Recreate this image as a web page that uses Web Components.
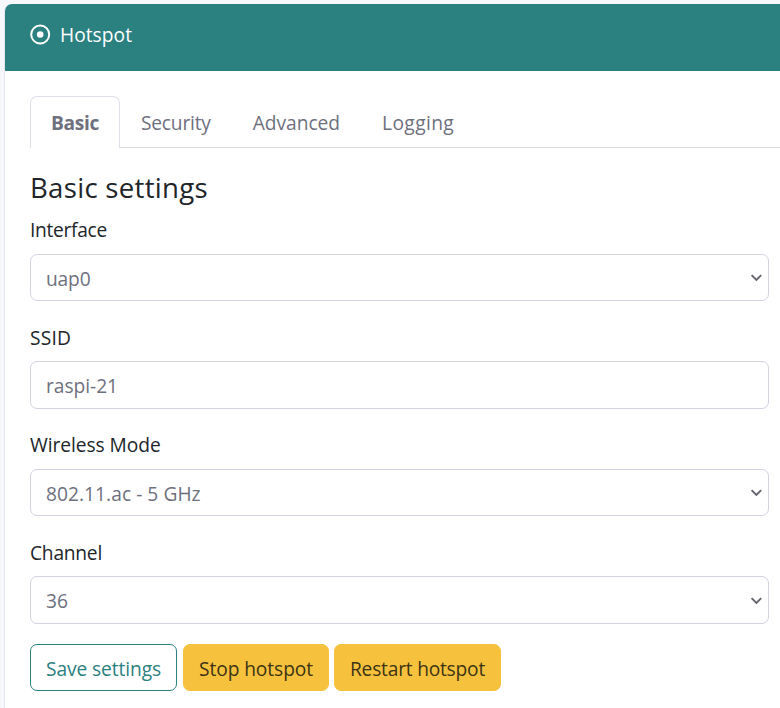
<!DOCTYPE html>
<html lang="en">
<head>
<meta charset="utf-8">
<title>Hotspot</title>
<style>
html,body{margin:0;height:100%;overflow:hidden;background:#f7f8fc}
body{font:19.2px/29px "Open Sans","Noto Sans",sans-serif;color:#212529}
</style>
</head>
<body>
<hotspot-page></hotspot-page>
<script>
function define(name, html, setup) {
  const template = document.createElement('template');
  template.innerHTML = html;
  customElements.define(name, class extends HTMLElement {
    connectedCallback() {
      if (this.shadowRoot) return;
      this.attachShadow({mode: 'open'}).append(template.content.cloneNode(true));
      if (setup) setup(this, this.shadowRoot);
    }
  });
}

// Text run that spreads its letters over the width given in pixels.
define('fit-text', `<style>:host{display:inline-block;white-space:pre;text-align:left}span{display:inline-block}</style><span></span>`,
  (host, root) => {
    const span = root.querySelector('span');
    span.textContent = host.getAttribute('text');
    const width = Number(host.getAttribute('width'));
    const natural = span.getBoundingClientRect().width;
    span.style.letterSpacing = (width - natural) / span.textContent.length + 'px';
    host.style.width = width + 'px';
  });

define('card-header', `<style>
  :host{display:flex;align-items:flex-start;box-sizing:border-box;height:67px;padding:16px 25px 0;gap:9px;background:#2b8080;color:#fff;border-radius:7px 0 0 0}
  svg{display:block;width:21px;height:21px;margin-top:4px}
</style>
<svg viewBox="0 0 21 21"><circle cx="10.2" cy="10.5" r="9" fill="none" stroke="#fff" stroke-width="2"/><circle cx="10.2" cy="10.5" r="3.3" fill="#fff"/></svg>
<slot></slot>`);

define('tab-item', `<style>
  :host{display:block;box-sizing:border-box;height:52px;padding:11px 20px 0;border:1px solid transparent;border-bottom:0;border-radius:7px 7px 0 0;color:#6e707e}
  :host([active]){font-weight:700;border-color:#dddfeb;background:#fff}
</style><slot></slot>`);

define('tab-bar', `<style>
  :host{display:flex;height:51px;border-bottom:1px solid #d9dbe0;margin-right:-12px}
</style><slot></slot>`);

define('form-field', `<style>
  :host{display:block;height:107.4px}
  .label{height:29px;margin-bottom:9.5px}
  .control{display:flex;justify-content:space-between;box-sizing:border-box;height:47.5px;padding:9px 5px 0 15px;border:1px solid #d1d3e2;border-radius:7px;color:#6e707e;background:#fff}
  svg{width:14px;height:14px;margin-top:7.6px;display:none}
  :host([select]) svg{display:block}
</style>
<div class="label"><slot name="label"></slot></div>
<div class="control"><slot></slot><svg viewBox="0 0 14 14"><path d="M2.6 4.2 7.4 9l4.8-4.8" fill="none" stroke="#62636c" stroke-width="1.9"/></svg></div>`);

define('action-button', `<style>
  :host{display:block;box-sizing:border-box;height:47px;padding:9px 15px 0;border:1px solid #f6c23e;border-radius:7px;background:#f6c23e;color:#3d3315}
  :host([outline]){border-color:#2b8080;background:#fff;color:#2b8080}
</style><slot></slot>`);

define('hotspot-page', `<style>
  :host{display:block;box-sizing:border-box;height:708px;padding:4px 0 0 4px}
  .card{box-sizing:border-box;height:720px;border-left:1px solid #e3e6f0;background:#fff;border-radius:7px 0 0 0}
  .body{padding:25px 11px 0 25px}
  h4{margin:22px 0 10.4px;font-size:27.6px;line-height:35px;font-weight:400;height:35px}
  .actions{display:flex;margin-top:-1.4px}
  .actions :nth-child(2){margin:0 5px 0 6px}
</style>
<div class="card">
  <card-header><fit-text text="Hotspot" width="72"></fit-text></card-header>
  <div class="body">
    <tab-bar>
      <tab-item active><fit-text text="Basic" width="48"></fit-text></tab-item>
      <tab-item><fit-text text="Security" width="69.7"></fit-text></tab-item>
      <tab-item><fit-text text="Advanced" width="87.4"></fit-text></tab-item>
      <tab-item><fit-text text="Logging" width="72"></fit-text></tab-item>
    </tab-bar>
    <h4><fit-text text="Basic settings" width="178"></fit-text></h4>
    <form-field select><fit-text slot="label" text="Interface" width="77"></fit-text><fit-text text="uap0" width="44.5"></fit-text></form-field>
    <form-field><fit-text slot="label" text="SSID" width="41"></fit-text><fit-text text="raspi-21" width="72"></fit-text></form-field>
    <form-field select><fit-text slot="label" text="Wireless Mode" width="130.6"></fit-text><fit-text text="802.11.ac - 5 GHz" width="154.6"></fit-text></form-field>
    <form-field select><fit-text slot="label" text="Channel" width="72"></fit-text><fit-text text="36" width="22"></fit-text></form-field>
    <div class="actions">
      <action-button outline><fit-text text="Save settings" width="115"></fit-text></action-button>
      <action-button><fit-text text="Stop hotspot" width="114"></fit-text></action-button>
      <action-button><fit-text text="Restart hotspot" width="135"></fit-text></action-button>
    </div>
  </div>
</div>`);
</script>
</body>
</html>
